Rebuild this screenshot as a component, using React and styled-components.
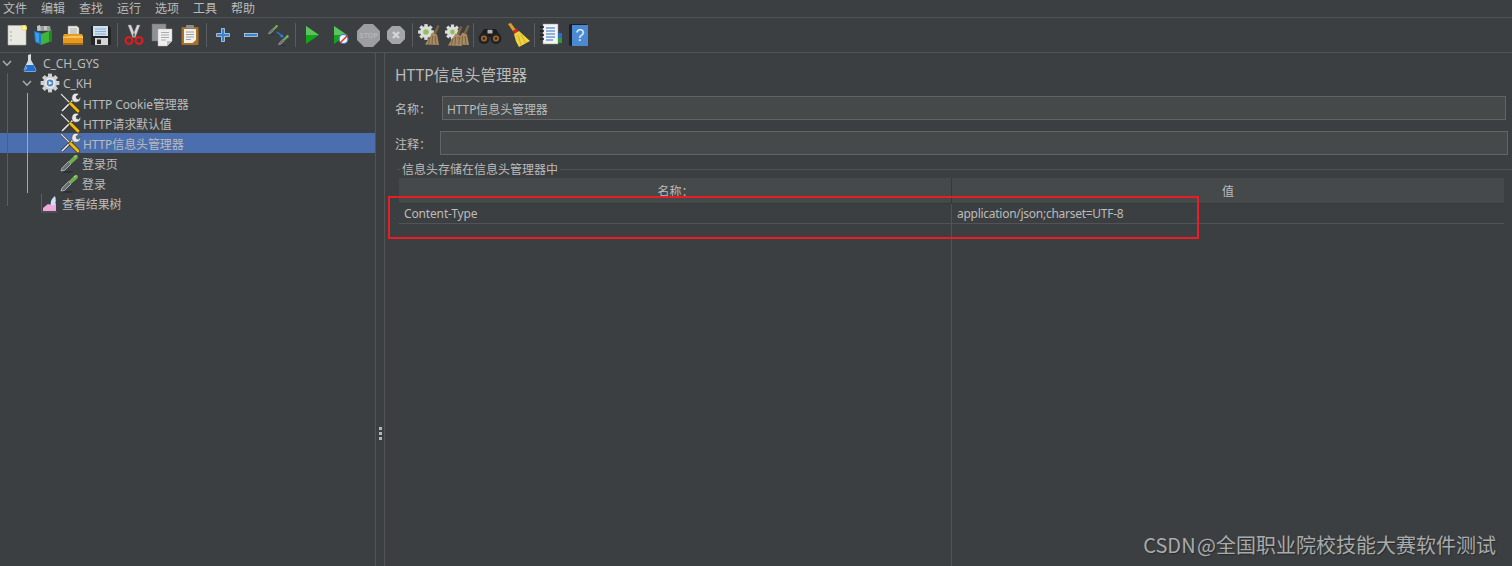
import React from 'react';
import styled, { createGlobalStyle } from 'styled-components';

const GlobalStyle = createGlobalStyle`
  html, body { margin: 0; padding: 0; height: 100%; background: #3c3f41; overflow: hidden; }
  #root { height: 100%; }
  * { box-sizing: border-box; }
  svg { overflow: visible; }
`;

const Page = styled.div`
  position: relative;
  display: flex;
  flex-direction: column;
  height: 566px;
  background: #3c3f41;
  color: #bbbbbb;
  font: 12px/1 "Noto Sans", "Noto Sans CJK SC", sans-serif;
  overflow: hidden;
`;

const MenuBar = styled.div`
  display: flex;
  height: 18px;
  padding-left: 3px;
  gap: 14px;
  align-items: center;
  border-bottom: 1px solid #515354;
`;

const MenuItem = styled.span`
  width: 24px;
  white-space: nowrap;
  line-height: 15px;
  margin-top: -1px;
`;

const ToolBar = styled.div`
  display: flex;
  align-items: center;
  height: 35px;
  padding-left: 3px;
  border-bottom: 1px solid #515354;
`;

const ToolButton = styled.div`
  display: flex;
  width: 28px;
  height: 28px;
  align-items: center;
  justify-content: center;
  flex: none;
`;

const ToolSep = styled.div`
  width: 1px;
  height: 24px;
  margin: 0 2px;
  background: #5a5d5f;
  flex: none;
`;

const Main = styled.div`
  display: flex;
  flex: 1;
  min-height: 0;
`;

const TreePanel = styled.div`
  width: 375px;
  flex: none;
`;

const TreeGroup = styled.div`
  position: relative;

  &::before {
    content: "";
    position: absolute;
    z-index: 1;
    left: ${p => p.$lineX}px;
    top: ${p => p.$lineTop}px;
    bottom: ${p => p.$lineBottom}px;
    width: 1px;
    background: ${p => p.$lineColor};
  }
`;

const TreeRow = styled.div`
  display: flex;
  align-items: center;
  height: 20px;
  padding-left: ${p => p.$indent}px;
  background: ${p => (p.$selected ? '#4b6eaf' : 'transparent')};
  white-space: nowrap;
`;

const Toggle = styled.span`
  display: flex;
  width: 20px;
  flex: none;
  padding-left: 2px;
`;

const NodeIcon = styled.span`
  display: flex;
  width: 20px;
  height: 20px;
  flex: none;
  margin-right: ${p => p.$gap ?? 3}px;
`;

const NodeLabel = styled.span`
  padding-top: ${p => (p.$parent ? 1 : 3)}px;
  letter-spacing: -0.12px;
`;

const Divider = styled.div`
  width: 10px;
  flex: none;
  display: flex;
  flex-direction: column;
  align-items: center;
  gap: 2px;
  padding-top: 374px;
  border-left: 1px solid #515354;
  border-right: 1px solid #515354;
`;

const GripDot = styled.span`
  width: 3px;
  height: 3px;
  background: #b4b7b9;
`;

const Editor = styled.div`
  flex: 1;
  min-width: 0;
  display: flex;
  flex-direction: column;
  padding: 12px 0 0 10px;
`;

const Title = styled.div`
  height: 20px;
  font-size: 15.6px;
  line-height: 20px;
`;

const FieldRow = styled.div`
  display: flex;
  align-items: center;
  height: 24px;
  margin-top: 11px;
  padding-right: ${p => p.$right}px;
`;

const FieldLabel = styled.label`
  width: ${p => p.$width}px;
  flex: none;
  padding-top: 3px;
  white-space: nowrap;
`;

const FieldInput = styled.div`
  flex: 1;
  height: 24px;
  padding: 2px 0 0 4px;
  line-height: 22px;
  letter-spacing: -0.1px;
  background: #45494a;
  border: 1px solid #646464;
`;

const Legend = styled.div`
  display: flex;
  align-items: center;
  height: 18px;
  margin: 5px 0 0 2px;
  gap: 2px;
`;

const LegendRule = styled.span`
  height: 1px;
  background: #515354;
  flex: ${p => (p.$grow ? 1 : 'none')};
  width: ${p => (p.$grow ? 'auto' : '3px')};
`;

const LegendText = styled.span`
  white-space: nowrap;
  padding-top: 2px;
`;

const Table = styled.div`
  flex: 1;
  display: flex;
  margin: 0 8px 0 4px;
`;

const Column = styled.div`
  display: flex;
  flex-direction: column;
  width: ${p => (p.$width ? `${p.$width}px` : 'auto')};
  flex: ${p => (p.$width ? 'none' : 1)};
  border-right: ${p => (p.$width ? '1px solid #515354' : 'none')};
`;

const HeadCell = styled.div`
  height: 26px;
  padding-top: 7px;
  line-height: 14px;
  text-align: center;
  background: #45494a;
  border-bottom: 1px solid #363839;
  ${p => (p.$sep ? 'margin-right: -1px; box-shadow: inset -1px 0 0 #363839;' : '')}
`;

const BodyCell = styled.div`
  height: 20px;
  padding-left: 5px;
  line-height: 20px;
  letter-spacing: ${p => p.$spacing}px;
  border-bottom: 1px solid #515354;
  white-space: nowrap;
`;

const Highlight = styled.div`
  position: absolute;
  left: 388px;
  top: 196px;
  width: 811px;
  height: 43px;
  border: 2px solid #e81d25;
`;

const Watermark = styled.div`
  position: absolute;
  right: 16px;
  top: 534px;
  font-family: "Noto Sans CJK SC", sans-serif;
  font-size: 20px;
  line-height: 22px;
  word-spacing: -3px;
  color: #a8aaab;
  text-shadow: 1px 1px 1px rgba(0, 0, 0, .35);
  white-space: nowrap;
`;

const Ico = ({ children, size = 20, view = 20 }) => (
  <svg width={size} height={size} viewBox={`0 0 ${view} ${view}`}>{children}</svg>
);

// small pieces shared by several icons
const Gear = ({ x = 0, y = 0, s = 1, fill = '#d8d8d8' }) => (
  <g transform={`translate(${x} ${y}) scale(${s})`}>
    {[0, 45, 90, 135].map(a => (
      <rect key={a} x="-1.6" y="-7.5" width="3.2" height="15" fill={fill} transform={`rotate(${a})`} />
    ))}
    <circle r="5.6" fill={fill} />
  </g>
);

const Broom = ({ x = 0, y = 0, s = 1, tone = '#a98a63' }) => (
  <g transform={`translate(${x} ${y}) scale(${s})`}>
    <path d="M15.5 0 L17.5 1 L14 9 L11.5 8 Z" fill="#7c6240" />
    <path d="M10.5 7.5 L15 9.5 L17 20 L3 19.5 Z" fill={tone} />
    <path d="M8 12 L6.5 19 M10.5 11 L10 19.5 M13 11 L14 19.5" stroke="#6f5736" strokeWidth=".8" />
  </g>
);

const Dropper = ({ x = 0, y = 0, s = 1 }) => (
  <g transform={`translate(${x} ${y}) scale(${s})`}>
    <ellipse cx="7" cy="18.8" rx="6" ry=".9" fill="#2c2e30" />
    <path d="M1 18 L2 15 L8.5 8.5 L11 11 L4.5 17.5 Z" fill="#6b7074" stroke="#e2e2e2" strokeWidth=".6" />
    <path d="M8.5 8.5 L14.5 2.5 Q16.2 1.2 17.4 2.4 Q18.6 3.8 17.4 5.4 L11 11 Z" fill="#6fae4e" />
    <path d="M14 4 L16.4 2.8" stroke="#b5dc96" strokeWidth="1" />
  </g>
);

const toolIcons = {
  newPlan: (
    <Ico>
      <path d="M1 .5 H19 V20 H1 Z" fill="#e9e9e2" stroke="#b5b5ae" strokeWidth=".6" />
      <circle cx="4" cy="7" r=".8" fill="#999" /><circle cx="4" cy="11" r=".8" fill="#999" /><circle cx="4" cy="15" r=".8" fill="#999" />
      <circle cx="17" cy="3" r="3" fill="#f3e36c" /><circle cx="17" cy="3" r="1.4" fill="#fff9c8" />
    </Ico>
  ),
  templates: (
    <Ico>
      <g transform="translate(-2 0)">
        <path d="M4 1 H17 L18 6 H4 Z" fill="#9a9c9b" />
        <path d="M4 1 L7 0 L8 5 L5 6 Z M11 1 L14 1 L14 5 L11 5 Z" fill="#c5c7c6" />
        <path d="M1 6 L8 8 V20 L2 17 Z" fill="#1f77c9" />
        <path d="M2 7 L6 8.5 V18 L3 16.5 Z" fill="#3da0e6" />
        <path d="M8 9 L19 5 V16 L8 20 Z" fill="#3fb43a" />
        <path d="M16 6 L19 5 V16 L16 17 Z" fill="#1f8a25" />
      </g>
    </Ico>
  ),
  open: (
    <Ico>
      <path d="M5 1 H14 L16 3 V11 H5 Z" fill="#e9e9e4" stroke="#8d8d88" strokeWidth=".5" />
      <path d="M7 4 H14 M7 6 H14 M7 8 H14" stroke="#9b9b96" strokeWidth=".7" />
      <path d="M1 9 H19 L20 11 V19 Q20 20 19 20 H1 Q0 20 0 19 V11 Z" fill="#e39a1f" />
      <path d="M0 12 Q8 10 20 11 V13 H0 Z" fill="#f5c35a" />
      <path d="M0 18 H20 V19 Q20 20 19 20 H1 Q0 20 0 19 Z" fill="#a96a12" />
    </Ico>
  ),
  save: (
    <Ico>
      <path d="M0 1 H18 L20 3 V20 H0 Z" fill="#232527" />
      <rect x="2" y="1" width="15" height="10" fill="#cfe0f0" />
      <path d="M4 4 H15 M4 6.5 H15 M4 9 H15" stroke="#7da2c9" strokeWidth=".8" />
      <rect x="4" y="13" width="13" height="7" fill="#d6d6d6" />
      <rect x="6" y="14.5" width="4" height="4.5" fill="#2c2c2c" />
    </Ico>
  ),
  cut: (
    <Ico>
      <path d="M4 0 L7 0 L11 10 L9 13 Z M16 0 L13 0 L9 10 L11 13 Z" fill="#d7d7d7" stroke="#8c8c8c" strokeWidth=".4" />
      <circle cx="5" cy="15.5" r="3.4" fill="none" stroke="#d81e1e" strokeWidth="2.2" />
      <circle cx="15" cy="15.5" r="3.4" fill="none" stroke="#d81e1e" strokeWidth="2.2" />
      <circle cx="10" cy="10.5" r="1" fill="#777" />
    </Ico>
  ),
  copy: (
    <Ico size={22} view={22}>
      <rect x="1" y="0" width="14" height="17" fill="#8f9193" stroke="#6d6f71" strokeWidth=".5" />
      <path d="M7 5 H21 V17 L16 22 H7 Z" fill="#efefef" stroke="#b0b0b0" strokeWidth=".5" />
      <path d="M16 22 V17 H21 Z" fill="#bdbdbd" />
      <path d="M10 8.5 H18 M10 11 H18 M10 13.5 H18 M10 16 H15" stroke="#9a9a9a" strokeWidth=".8" />
    </Ico>
  ),
  paste: (
    <Ico>
      <rect x="1.5" y="2" width="17" height="18" rx="1" fill="#a96f23" />
      <rect x="6" y="0" width="8" height="3.5" rx="1" fill="#8e8e8e" />
      <path d="M4 4 H16 V15 L12.5 18 H4 Z" fill="#f0f0ee" />
      <path d="M6 7 H14 M6 9.5 H14 M6 12 H14 M6 14.5 H11" stroke="#8f8f8f" strokeWidth=".8" />
    </Ico>
  ),
  plus: (
    <Ico>
      <path d="M8.5 3.5 H11.5 V8.5 H16.5 V11.5 H11.5 V16.5 H8.5 V11.5 H3.5 V8.5 H8.5 Z" fill="#3d83d3" stroke="#bcd3ea" strokeWidth=".8" />
    </Ico>
  ),
  minus: (
    <Ico>
      <rect x="3.5" y="8.5" width="13" height="3" fill="#3d83d3" stroke="#bcd3ea" strokeWidth=".8" />
    </Ico>
  ),
  toggle: (
    <Ico size={22} view={22}>
      <Dropper x="0" y="0" s=".55" />
      <Dropper x="10" y="10" s=".6" />
      <path d="M9 8 L14 12" stroke="#2f7ed8" strokeWidth="1.3" />
      <path d="M15.5 13.5 L11.5 13 L14.5 10 Z" fill="#2f7ed8" />
    </Ico>
  ),
  start: (
    <Ico>
      <path d="M4 1 L17 10 L4 19 Z" fill="#12a51c" />
      <path d="M4 1 L17 10 H4 Z" fill="#5dc25f" />
    </Ico>
  ),
  startNoPause: (
    <Ico>
      <path d="M4 1 L17 10 L4 19 Z" fill="#12a51c" />
      <path d="M4 1 L17 10 H4 Z" fill="#5dc25f" />
      <circle cx="13.5" cy="14" r="4.5" fill="#f2f4f8" stroke="#3c78c8" strokeWidth="1.2" />
      <path d="M10 18 L18 10" stroke="#e02828" strokeWidth="1.3" />
    </Ico>
  ),
  stop: (
    <Ico size={23} view={23}>
      <path d="M7 0 H16 L23 7 V16 L16 23 H7 L0 16 V7 Z" fill="#9c9e9f" />
      <text x="11.5" y="14" textAnchor="middle" fontSize="7" fontWeight="700" fill="#b5b6b7" fontFamily="Liberation Sans, sans-serif">STOP</text>
    </Ico>
  ),
  shutdown: (
    <Ico>
      <path d="M6 1 H14 L19 6 V14 L14 19 H6 L1 14 V6 Z" fill="#a3a5a6" />
      <path d="M7 7 L13 13 M13 7 L7 13" stroke="#d3d4d5" strokeWidth="2.4" />
    </Ico>
  ),
  clear: (
    <Ico size={22} view={22}>
      <Gear x="8" y="8" s="1.05" fill="#dcdcdc" />
      <circle cx="8" cy="8" r="2.8" fill="#8fc255" />
      <Broom x="4" y="1" s="1" />
    </Ico>
  ),
  clearAll: (
    <Ico size={22} view={22}>
      <Gear x="6.5" y="8" s="1" fill="#dcdcdc" />
      <circle cx="6.5" cy="8" r="2.4" fill="#8fc255" />
      <Broom x="-1" y="2" s="1" />
      <Broom x="6" y="1" s="1" />
    </Ico>
  ),
  search: (
    <Ico size={24} view={24}>
      <path d="M6 6 H10 V10 H14 V6 H18 L23 14 H1 Z" fill="#1d1d1d" />
      <circle cx="6" cy="15.5" r="5.5" fill="#222" />
      <circle cx="18" cy="15.5" r="5.5" fill="#222" />
      <circle cx="6" cy="15.5" r="3" fill="#9c6a3a" />
      <circle cx="18" cy="15.5" r="3" fill="#9c6a3a" />
      <circle cx="6" cy="15.5" r="1.4" fill="#4a2d12" />
      <circle cx="18" cy="15.5" r="1.4" fill="#4a2d12" />
      <rect x="9.5" y="7" width="5" height="3.5" fill="#b5b5b5" />
    </Ico>
  ),
  reset: (
    <Ico size={24} view={24}>
      <path d="M2 1 L5 0 L10 7 L7.5 9 Z" fill="#d9a11c" />
      <path d="M6.5 8 L10.5 5.5 L12.5 8 L8.5 11 Z" fill="#d8262b" />
      <path d="M8 11 L13 8 L24 18 L13 24 Q9 18 8 11 Z" fill="#efd33e" />
      <path d="M12 12 L15 22 M15 11.5 L19.5 20" stroke="#c9a31f" strokeWidth=".8" />
    </Ico>
  ),
  functions: (
    <Ico size={22} view={22}>
      <rect x="3" y="0" width="15" height="20" fill="#f4f4f4" stroke="#8f8f8f" strokeWidth=".5" />
      <path d="M6 4 H15 M6 7 H15 M6 10 H15 M6 13 H15 M6 16 H13" stroke="#2a6fc4" strokeWidth="1.1" />
      <path d="M0 3 H4 M0 7 H4 M0 11 H4 M0 15 H4" stroke="#1b1b1b" strokeWidth="1.5" />
      <rect x="18" y="9" width="4" height="5" fill="#2a6fc4" />
      <rect x="18" y="14" width="4" height="5" fill="#2f9a3d" />
    </Ico>
  ),
  help: (
    <Ico size={22} view={22}>
      <path d="M1 1 Q1 0 3 0 H19 V22 H3 Q1 22 1 20 Z" fill="#1c2024" />
      <rect x="4" y="1" width="16" height="21" fill="#4a8ad4" />
      <text x="12" y="17" textAnchor="middle" fontSize="16" fill="#e6eef8" fontFamily="Liberation Sans, sans-serif">?</text>
    </Ico>
  ),
};

const toolbarGroups = [
  ['newPlan', 'templates', 'open', 'save'],
  ['cut', 'copy', 'paste'],
  ['plus', 'minus', 'toggle'],
  ['start', 'startNoPause', 'stop', 'shutdown'],
  ['clear', 'clearAll'],
  ['search', 'reset'],
  ['functions', 'help'],
];

const ChevronDown = () => (
  <svg width="10" height="7" viewBox="0 0 10 7">
    <path d="M1 1 L5 5.2 L9 1" fill="none" stroke="#a9abad" strokeWidth="1.6" />
  </svg>
);

const FlaskIcon = () => (
  <Ico>
    <path d="M8 2 L11 1 V7 L16 16 Q17 19 14 19 H6 Q3 19 4 16 L8 7.5 Z" fill="#d9dcdf" />
    <path d="M6.5 12 H13.5 L15.8 16.5 Q16.3 18.5 14 18.5 H6 Q3.7 18.5 4.2 16.5 Z" fill="#1f6fd0" />
    <path d="M6.8 14 L5.6 16.8" stroke="#9fc6ef" strokeWidth=".9" />
  </Ico>
);

const GearIcon = () => (
  <Ico>
    <Gear x="10" y="10" s="1.25" fill="#cfd1d3" />
    <circle cx="10" cy="10" r="5" fill="#f0f0f0" />
    <circle cx="10" cy="10" r="3.4" fill="#4c88c6" />
    <path d="M8.7 8 L12.4 10 L8.7 12 Z" fill="#e8eef6" />
  </Ico>
);

const ToolsIcon = () => (
  <Ico>
    {/* wrench, lower left to upper right */}
    <path d="M2 18 L12.5 7.5" stroke="#2e3032" strokeWidth="3" />
    <path d="M2 18 L12.5 7.5" stroke="#e8e8e8" strokeWidth="1.7" />
    <path d="M14.5 .4 Q17.5 -.2 19 1 L16 3.6 L16.6 5.6 L18.6 6.2 L20.4 3.4 Q21 7 18.4 8.8 Q15.5 10 13 8.4 Q10.8 5.4 12.4 2.4 Q13.2 1 14.5 .4 Z" fill="#e8e8e8" stroke="#2e3032" strokeWidth=".5" />
    {/* screwdriver, yellow handle lower right */}
    <path d="M1 1 L11 11" stroke="#2e3032" strokeWidth="2" />
    <path d="M1 1 L11 11" stroke="#e4e4e4" strokeWidth="1.1" />
    <path d="M10.5 10.5 L18 18" stroke="#3d3100" strokeWidth="4" strokeLinecap="round" />
    <path d="M10.5 10.5 L18 18" stroke="#f2b90f" strokeWidth="2.9" strokeLinecap="round" />
  </Ico>
);

const GraphIcon = () => (
  <Ico>
    <path d="M1.5 1 V19" stroke="#5b5e60" strokeWidth="1" />
    <path d="M1.5 19 H18" stroke="#5b5e60" strokeWidth="1" />
    <path d="M3 18 V15 L8 11 L11 12 L16 10 V18 Z" fill="#f0a8dc" />
    <path d="M10.5 12 Q10.5 6 15 3 Q16.8 8 14.5 11.5 Q12.5 13 10.5 12 Z" fill="#cfe0f6" />
  </Ico>
);

const nodeIcons = {
  flask: <FlaskIcon />,
  gear: <GearIcon />,
  tools: <ToolsIcon />,
  dropper: <Ico><Dropper /></Ico>,
  graph: <GraphIcon />,
};

const Node = ({ indent, icon, label, open, selected, gap }) => (
  <TreeRow $indent={indent} $selected={selected}>
    <Toggle>{open && <ChevronDown />}</Toggle>
    <NodeIcon $gap={gap}>{nodeIcons[icon]}</NodeIcon>
    <NodeLabel $parent={open}>{label}</NodeLabel>
  </TreeRow>
);

const menus = ['文件', '编辑', '查找', '运行', '选项', '工具', '帮助'];

export default function App() {
  return (
    <Page>
      <GlobalStyle />
      <MenuBar>
        {menus.map(item => <MenuItem key={item}>{item}</MenuItem>)}
      </MenuBar>
      <ToolBar>
        {toolbarGroups.map((group, index) => (
          <React.Fragment key={group[0]}>
            {index > 0 && <ToolSep />}
            {group.map(name => <ToolButton key={name}>{toolIcons[name]}</ToolButton>)}
          </React.Fragment>
        ))}
      </ToolBar>
      <Main>
        <TreePanel>
          <Node indent={0} icon="flask" label="C_CH_GYS" open />
          <TreeGroup $lineX={7} $lineTop={0} $lineBottom={7} $lineColor="#5b5e60">
            <Node indent={20} icon="gear" label="C_KH" open />
            <TreeGroup $lineX={27} $lineTop={0} $lineBottom={0} $lineColor="#7fb1dc">
              <Node indent={40} icon="tools" label="HTTP Cookie管理器" />
              <Node indent={40} icon="tools" label="HTTP请求默认值" />
              <Node indent={40} icon="tools" label="HTTP信息头管理器" selected />
              <Node indent={40} icon="dropper" label="登录页" gap={2} />
              <Node indent={40} icon="dropper" label="登录" gap={2} />
            </TreeGroup>
            <Node indent={20} icon="graph" label="查看结果树" gap={2} />
          </TreeGroup>
        </TreePanel>
        <Divider>
          <GripDot />
          <GripDot />
          <GripDot />
        </Divider>
        <Editor>
          <Title>HTTP信息头管理器</Title>
          <FieldRow $right={6}>
            <FieldLabel $width={47}>名称：</FieldLabel>
            <FieldInput>HTTP信息头管理器</FieldInput>
          </FieldRow>
          <FieldRow $right={4}>
            <FieldLabel $width={45}>注释：</FieldLabel>
            <FieldInput />
          </FieldRow>
          <Legend>
            <LegendRule />
            <LegendText>信息头存储在信息头管理器中</LegendText>
            <LegendRule $grow />
          </Legend>
          <Table>
            <Column $width={553}>
              <HeadCell $sep>名称：</HeadCell>
              <BodyCell $spacing={-0.15}>Content-Type</BodyCell>
            </Column>
            <Column>
              <HeadCell>值</HeadCell>
              <BodyCell $spacing={-0.27}>application/json;charset=UTF-8</BodyCell>
            </Column>
          </Table>
        </Editor>
      </Main>
      <Highlight />
      <Watermark>CSDN @全国职业院校技能大赛软件测试</Watermark>
    </Page>
  );
}
